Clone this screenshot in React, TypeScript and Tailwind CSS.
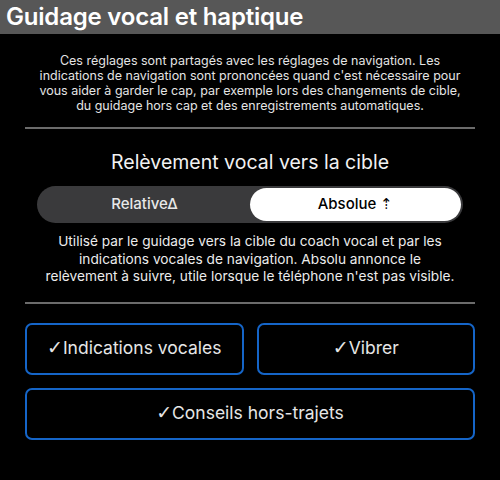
import { useState } from 'react';

const options = [
  { id: 'voice', label: 'Indications vocales' },
  { id: 'vibrate', label: 'Vibrer' },
];

function Check() {
  return <span className="font-['DejaVu_Sans',sans-serif] text-[19px] leading-none">✓</span>;
}

export default function App() {
  const [mode, setMode] = useState<'relative' | 'absolute'>('absolute');

  return (
    <div className="w-[500px] h-[480px] bg-black text-white font-['Inter',sans-serif] overflow-hidden">
      <div className="h-[34px] bg-[#575757] flex items-center px-[6px]">
        <h1 className="text-[24px] font-semibold leading-none tracking-[-0.2px]">Guidage vocal et haptique</h1>
      </div>

      <div className="px-[25px]">
        <p className="mt-[19px] text-center text-[12.5px] leading-[15px] text-[#e4e4e4]">
          Ces réglages sont partagés avec les réglages de navigation. Les
          <br />
          indications de navigation sont prononcées quand c'est nécessaire pour
          <br />
          vous aider à garder le cap, par exemple lors des changements de cible,
          <br />
          du guidage hors cap et des enregistrements automatiques.
        </p>

        <div className="mt-[14px] h-[2px] bg-[#6b6b6b]" />

        <h2 className="mt-[21px] text-center text-[19.5px] leading-[24px] text-[#f2f2f2]">
          Relèvement vocal vers la cible
        </h2>

        <div className="mt-[12px] mx-[12px] h-[37px] rounded-full bg-[#3a3a3c] p-[2px] flex">
          <button
            onClick={() => setMode('relative')}
            className={`flex-1 rounded-full text-[15px] font-medium ${mode === 'relative' ? 'bg-white text-black' : 'text-[#e8e8e8]'}`}
          >
            Relative∆
          </button>
          <button
            onClick={() => setMode('absolute')}
            className={`flex-1 rounded-full text-[15px] font-medium ${mode === 'absolute' ? 'bg-white text-black' : 'text-[#e8e8e8]'}`}
          >
            Absolue ⇡
          </button>
        </div>

        <p className="mt-[10px] text-center text-[13.7px] leading-[17.5px] text-[#ececec]">
          Utilisé par le guidage vers la cible du coach vocal et par les
          <br />
          indications vocales de navigation. Absolu annonce le
          <br />
          relèvement à suivre, utile lorsque le téléphone n'est pas visible.
        </p>

        <div className="mt-[16px] h-[2px] bg-[#6b6b6b]" />

        <div className="mt-[19px] grid grid-cols-2 gap-x-[13px] gap-y-[13px]">
          {options.map((o) => (
            <button
              key={o.id}
              className="h-[52px] rounded-[7px] border-2 border-[#1565c8] text-[17.5px] text-[#e6e6e6]"
            >
              <Check />
              {o.label}
            </button>
          ))}
          <button className="col-span-2 h-[52px] rounded-[7px] border-2 border-[#1565c8] text-[17.5px] text-[#e6e6e6]">
            <Check />
            Conseils hors-trajets
          </button>
        </div>
      </div>
    </div>
  );
}
